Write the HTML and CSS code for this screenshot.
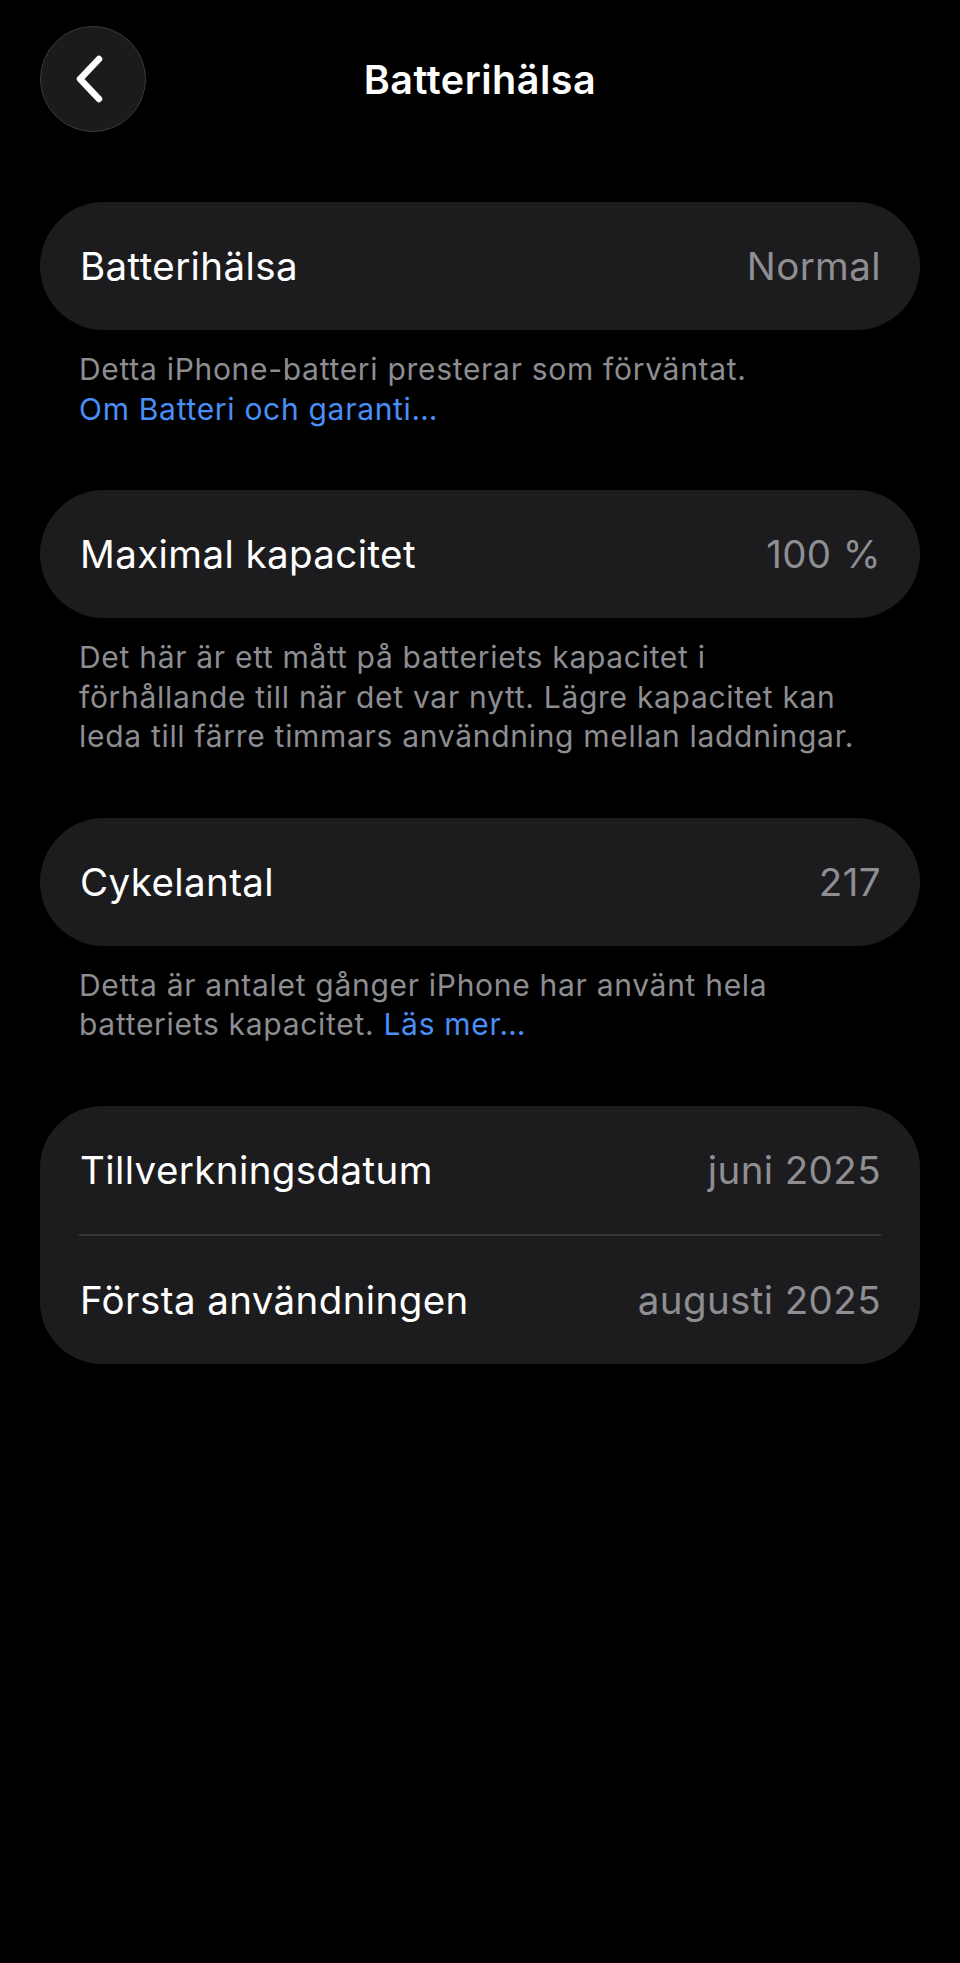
FILE: index.html
```html
<!DOCTYPE html>
<html lang="sv">
<head>
<meta charset="utf-8">
<title>Batterihälsa</title>
<link rel="stylesheet" href="styles.css">
</head>
<body>
<div class="screen">
  <header class="nav">
    <div class="nav-left">
      <button class="back" aria-label="Tillbaka">
        <svg width="40" height="56" viewBox="0 0 40 56" aria-hidden="true">
          <path d="M29 8 L10 28 L29 48" fill="none" stroke="#ffffff" stroke-width="6.5" stroke-linecap="round" stroke-linejoin="round"/>
        </svg>
      </button>
    </div>
    <h1 class="title">Batterihälsa</h1>
    <div class="nav-right"></div>
  </header>

  <main class="content">
    <section class="group">
      <div class="card">
        <div class="row"><span class="label">Batterihälsa</span><span class="value">Normal</span></div>
      </div>
      <p class="note">Detta iPhone-batteri presterar som förväntat.<br><a class="link">Om Batteri och garanti…</a></p>
    </section>

    <section class="group">
      <div class="card">
        <div class="row"><span class="label">Maximal kapacitet</span><span class="value">100 %</span></div>
      </div>
      <p class="note">Det här är ett mått på batteriets kapacitet i<br>förhållande till när det var nytt. Lägre kapacitet kan<br>leda till färre timmars användning mellan laddningar.</p>
    </section>

    <section class="group">
      <div class="card">
        <div class="row"><span class="label">Cykelantal</span><span class="value">217</span></div>
      </div>
      <p class="note">Detta är antalet gånger iPhone har använt hela<br>batteriets kapacitet. <a class="link">Läs mer…</a></p>
    </section>

    <section class="group">
      <div class="card card-list">
        <div class="row"><span class="label">Tillverkningsdatum</span><span class="value">juni 2025</span></div>
        <div class="divider"></div>
        <div class="row"><span class="label">Första användningen</span><span class="value">augusti 2025</span></div>
      </div>
    </section>
  </main>
</div>
</body>
</html>
```

FILE: styles.css
```css
* { box-sizing: border-box; }

html, body {
  margin: 0;
  padding: 0;
  background: #000000;
}

body {
  font-family: Inter, "Noto Sans", "Liberation Sans", sans-serif;
  color: #ffffff;
  -webkit-font-smoothing: antialiased;
}

.screen {
  width: 960px;
  min-height: 1963px;
  background: #000000;
}

.nav {
  display: grid;
  grid-template-columns: 1fr auto 1fr;
  align-items: center;
  padding: 26px 40px 0 40px;
  height: 132px;
}

.nav-left {
  display: flex;
  align-items: center;
}

.back {
  width: 106px;
  height: 106px;
  border-radius: 50%;
  background: #1b1b1d;
  border: 1.5px solid #3a3a3c;
  display: flex;
  align-items: center;
  justify-content: center;
  padding: 0 6px 0 0;
  margin: 0;
  cursor: pointer;
}

.title {
  margin: 0;
  padding-top: 2px;
  font-size: 39.5px;
  font-weight: 600;
  letter-spacing: 0.5px;
  color: #ffffff;
  text-align: center;
}

.content {
  padding: 70px 40px 0 40px;
  display: flex;
  flex-direction: column;
}

.group {
  display: flex;
  flex-direction: column;
}

.card {
  background: #1c1c1e;
  border-radius: 64px;
}

.card-list {
  border-radius: 62px;
}

.row {
  height: 128px;
  display: flex;
  align-items: center;
  justify-content: space-between;
  padding: 0 39px 0 40px;
}

.label {
  font-size: 38.5px;
  font-weight: 400;
  letter-spacing: 0.4px;
  color: #ffffff;
}

.value {
  font-size: 38.5px;
  font-weight: 400;
  letter-spacing: 0.4px;
  color: #8e8e93;
}

.divider {
  height: 2px;
  margin: 0 39px;
  background: #38383a;
}

.note {
  margin: 0;
  padding: 20px 30px 61px 39px;
  font-size: 30px;
  line-height: 39.5px;
  letter-spacing: 0.7px;
  color: #8d8d92;
}

.link {
  color: #4a8ef7;
  text-decoration: none;
}
```
